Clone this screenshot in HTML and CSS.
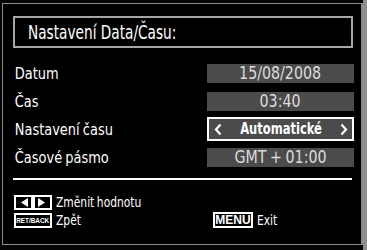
FILE: index.html
```html
<!DOCTYPE html>
<html lang="cs">
<head>
<meta charset="utf-8">
<link rel="stylesheet" href="styles.css">
</head>
<body>
<div class="tv">
  <div class="frame">
    <div class="title"><span class="tt">Nastavení Data/Času:</span></div>
    <div class="rows">
      <div class="label">Datum</div>
      <div class="val"><span class="vt">15/08/2008</span></div>
      <div class="label">Čas</div>
      <div class="val"><span class="vt">03:40</span></div>
      <div class="label">Nastavení času</div>
      <div class="val sel">
        <svg class="chev" width="8" height="13" viewBox="0 0 8 13"><path d="M6.5 1.5 L2 6.5 L6.5 11.5" fill="none" stroke="#fff" stroke-width="2.2"/></svg>
        <span class="st">Automatické</span>
        <svg class="chev" width="8" height="13" viewBox="0 0 8 13"><path d="M1.5 1.5 L6 6.5 L1.5 11.5" fill="none" stroke="#fff" stroke-width="2.2"/></svg>
      </div>
      <div class="label">Časové pásmo</div>
      <div class="val"><span class="vt gmt">GMT + 01:00</span></div>
    </div>
    <div class="sep"></div>
    <div class="footer">
      <div class="hint">
        <svg class="arrows" width="38" height="15" viewBox="0 0 38 15">
          <rect x="1" y="1" width="17" height="13" fill="#000" stroke="#fff" stroke-width="2"/>
          <rect x="20" y="1" width="17" height="13" fill="#000" stroke="#fff" stroke-width="2"/>
          <path d="M7 7.5 L14 3 L14 12 Z" fill="#fff"/>
          <path d="M31 7.5 L24 3 L24 12 Z" fill="#fff"/>
        </svg>
        <span class="ft">Změnit hodnotu</span>
      </div>
      <div></div>
      <div class="hint"><span class="key ret"><span class="kt">RET/BACK</span></span><span class="ft">Zpět</span></div>
      <div class="hint"><span class="key menu">MENU</span><span class="ft">Exit</span></div>
    </div>
  </div>
  <div class="edge"></div>
</div>
</body>
</html>
```
FILE: styles.css
```css
html, body {
  margin: 0;
  height: 100%;
}
body {
  background: #050505;
  color: #fff;
  font-family: "DejaVu Sans Condensed", "DejaVu Sans", sans-serif;
  overflow: hidden;
}
.tv {
  display: flex;
  width: 367px;
  height: 250px;
}
.frame {
  flex: 1;
  margin: 3px 0 5px 2px;
  border: 1px solid #8a8a8a;
  border-right-width: 2px;
  box-sizing: border-box;
  padding: 12px 0 0 10px;
  display: flex;
  flex-direction: column;
  background: #000;
}
.edge {
  width: 4px;
  background: #8e8e8e;
}
.title {
  width: 340px;
  height: 32px;
  box-sizing: border-box;
  border: 2px solid #a6a6a6;
  padding-left: 13px;
  font-size: 19px;
  line-height: 28px;
}
.tt {
  display: inline-block;
  transform: scaleX(0.8);
  transform-origin: left center;
}
.rows {
  display: grid;
  grid-template-columns: 194px 147px;
  grid-auto-rows: 24px;
  row-gap: 4px;
  margin-top: 13px;
  align-items: center;
}
.label {
  padding-left: 2px;
  font-size: 16px;
  transform: scaleX(0.9);
  transform-origin: left center;
  word-spacing: -1px;
}
.val {
  height: 19px;
  background: #4b4b4b;
  color: #dcdcdc;
  font-size: 17px;
  line-height: 19px;
  text-align: center;
}
.vt {
  display: inline-block;
  transform: scaleX(0.93);
}
.gmt {
  word-spacing: -1px;
}
.val.sel {
  height: 24px;
  border: 2px solid #fff;
  box-sizing: border-box;
  display: flex;
  justify-content: space-between;
  align-items: center;
  padding: 0 4px 0 5px;
  color: #fff;
  font-weight: bold;
  font-size: 16px;
  line-height: 20px;
}
.chev {
  display: block;
}
.st {
  display: inline-block;
  transform: scaleX(0.8);
}
.sep {
  width: 339px;
  height: 2px;
  background: #fff;
  margin-top: 9px;
}
.footer {
  display: grid;
  grid-template-columns: 199px auto;
  row-gap: 2px;
  margin: 14px 0 0 1px;
}
.hint {
  display: flex;
  align-items: center;
  gap: 4px;
  height: 16px;
  font-size: 14px;
}
.ft {
  display: inline-block;
  transform: scaleX(0.85);
  transform-origin: left center;
  word-spacing: -1px;
}
.arrows {
  display: block;
}
.key {
  box-sizing: border-box;
  border: 2px solid #fff;
  background: #000;
  color: #fff;
  font-family: "Liberation Sans", Arial, sans-serif;
  font-weight: bold;
  display: flex;
  justify-content: center;
  align-items: center;
}
.ret {
  width: 38px;
  height: 15px;
  font-size: 8px;
  line-height: 11px;
}
.kt {
  display: block;
  flex: none;
  transform: scaleX(0.8);
}
.menu {
  width: 40px;
  height: 16px;
  font-size: 12px;
  line-height: 12px;
}
```
